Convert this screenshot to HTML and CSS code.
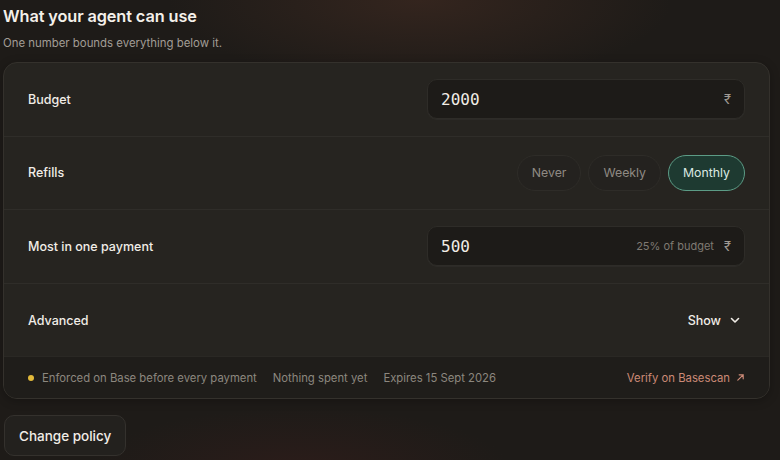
FILE: index.html
```html
<!DOCTYPE html>
<html lang="en">
<head>
<meta charset="utf-8">
<title>What your agent can use</title>
<link rel="stylesheet" href="styles.css">
</head>
<body>
<main class="page">
  <header class="head">
    <h1 class="title">What your agent can use</h1>
    <p class="subtitle">One number bounds everything below it.</p>
  </header>

  <section class="card">
    <div class="row">
      <span class="label">Budget</span>
      <div class="field">
        <span class="num">2000</span>
        <span class="field-end"><span class="cur">₹</span></span>
      </div>
    </div>
    <div class="row">
      <span class="label">Refills</span>
      <div class="pills">
        <button class="pill">Never</button>
        <button class="pill">Weekly</button>
        <button class="pill active">Monthly</button>
      </div>
    </div>
    <div class="row">
      <span class="label">Most in one payment</span>
      <div class="field">
        <span class="num">500</span>
        <span class="field-end"><span class="hint">25% of budget</span><span class="cur">₹</span></span>
      </div>
    </div>
    <div class="row">
      <span class="label">Advanced</span>
      <button class="toggle">Show
        <svg width="12" height="12" viewBox="0 0 12 12" fill="none" stroke="currentColor" stroke-width="1.6" stroke-linecap="round" stroke-linejoin="round"><path d="M2.5 4.5 6 8l3.5-3.5"/></svg>
      </button>
    </div>
    <footer class="foot">
      <div class="meta">
        <span class="dot"></span>
        <span>Enforced on Base before every payment</span>
        <span>Nothing spent yet</span>
        <span>Expires 15 Sept 2026</span>
      </div>
      <a class="verify" href="#">Verify on Basescan
        <svg width="9" height="9" viewBox="0 0 10 10" fill="none" stroke="currentColor" stroke-width="1.3" stroke-linecap="round"><path d="M2 8 8 2M3.5 2H8v4.5"/></svg>
      </a>
    </footer>
  </section>

  <div class="actions">
    <button class="btn">Change policy</button>
  </div>
</main>
</body>
</html>
```
FILE: styles.css
```css
* { box-sizing: border-box; }
html, body { height: 100%; }
body {
  margin: 0;
  font-family: Inter, "Noto Sans", sans-serif;
  color: #f2eee8;
  background:
    radial-gradient(ellipse 360px 120px at 420px 0px, rgba(70, 45, 35, 0.55), transparent 70%),
    radial-gradient(ellipse 300px 90px at 300px 470px, rgba(60, 30, 28, 0.45), transparent 70%),
    #1e1b18;
  overflow: hidden;
}
.page {
  padding: 3px 10px 0 3px;
  display: flex;
  flex-direction: column;
}
.head { padding-top: 3px; }
.title {
  margin: 0;
  font-size: 16.3px;
  font-weight: 600;
  line-height: 20px;
  letter-spacing: -0.1px;
  color: #f4f0ea;
}
.subtitle {
  margin: 10px 0 0;
  font-size: 11.4px;
  line-height: 14px;
  color: #a29d96;
}
.card {
  margin-top: 12px;
  background: #262420;
  border: 1px solid #34312c;
  border-radius: 14px;
  overflow: hidden;
  box-shadow: 0 2px 10px rgba(0,0,0,0.25);
}
.row {
  height: 73.6px;
  display: flex;
  align-items: center;
  justify-content: space-between;
  padding: 0 24px 0 24px;
  border-bottom: 1px solid #2f2d29;
}
.row:nth-child(4) { border-bottom: 1px solid #2a2824; }
.label {
  font-size: 12.5px;
  font-weight: 500;
  color: #f1ede7;
}
.field {
  width: 318px;
  height: 40px;
  display: flex;
  align-items: center;
  justify-content: space-between;
  padding: 0 13px 0 13px;
  background: #1d1b18;
  border: 1px solid #2e2c28;
  border-radius: 10px;
  box-shadow: 0 1px 0 rgba(255,255,255,0.03);
}
.num {
  font-family: "DejaVu Sans Mono", "Liberation Mono", monospace;
  font-size: 16px;
  color: #f1ede6;
}
.field-end { display: flex; align-items: center; gap: 10px; }
.hint { font-size: 11px; color: #7f7a73; }
.cur { font-size: 13px; color: #a09b94; }
.pills { display: flex; gap: 7px; }
.pill {
  height: 36px;
  padding: 0 14px;
  border-radius: 18px;
  border: 1px solid #2e2c28;
  background: #24221f;
  font-family: inherit;
  font-size: 12.3px;
  color: #8f8a83;
}
.pill.active {
  background: #1e3a31;
  border-color: #5c9c86;
  color: #dbe9e2;
}
.toggle {
  display: flex;
  align-items: center;
  gap: 8px;
  background: none;
  border: 0;
  padding: 0 4px 0 0;
  font-family: inherit;
  font-size: 12.5px;
  font-weight: 500;
  color: #f1ede7;
}
.foot {
  height: 41px;
  display: flex;
  align-items: center;
  justify-content: space-between;
  padding: 0 24px 0 24px;
  background: #1f1d1a;
  font-size: 11.3px;
  color: #8c877f;
}
.meta { display: flex; align-items: center; gap: 16px; }
.meta .dot {
  width: 6px;
  height: 6px;
  border-radius: 50%;
  background: #e2b93a;
  margin-right: -8px;
}
.verify {
  display: flex;
  align-items: center;
  gap: 6px;
  color: #cc8a77;
  text-decoration: none;
}
.actions { margin-top: 16px; display: flex; }
.btn {
  height: 41px;
  padding: 0 14px;
  border-radius: 10px;
  background: #23211e;
  border: 1px solid #34312d;
  font-family: inherit;
  font-size: 13.5px;
  font-weight: 500;
  color: #f1ede7;
  margin-left: 1px;
}
```
